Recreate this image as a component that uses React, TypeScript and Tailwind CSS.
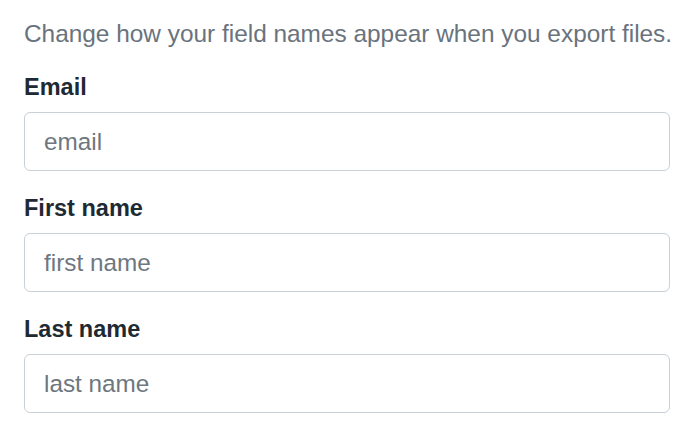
const fields = [
  { label: 'Email', placeholder: 'email' },
  { label: 'First name', placeholder: 'first name' },
  { label: 'Last name', placeholder: 'last name' },
];

export default function App() {
  return (
    <main className="min-h-screen bg-white font-['Liberation_Sans',Arial,sans-serif]">
      <section className="w-[670px] pl-[24px] pt-[18px]">
        <p className="whitespace-nowrap text-[24.4px] leading-[32px] text-[#69737d]">
          Change how your field names appear when you export files.
        </p>
        {fields.map((field) => (
          <div key={field.label} className="mt-[22px]">
            <label className="mb-[9px] block text-[23.5px] font-bold leading-[31px] text-[#1e2a33]">
              {field.label}
            </label>
            <input
              type="text"
              placeholder={field.placeholder}
              className="block h-[59px] w-full rounded-[6px] border border-[#c9d0d7] bg-white px-[19px] text-[24.3px] text-[#1e2a33] outline-none placeholder:text-[#6e7780]"
            />
          </div>
        ))}
      </section>
    </main>
  );
}
